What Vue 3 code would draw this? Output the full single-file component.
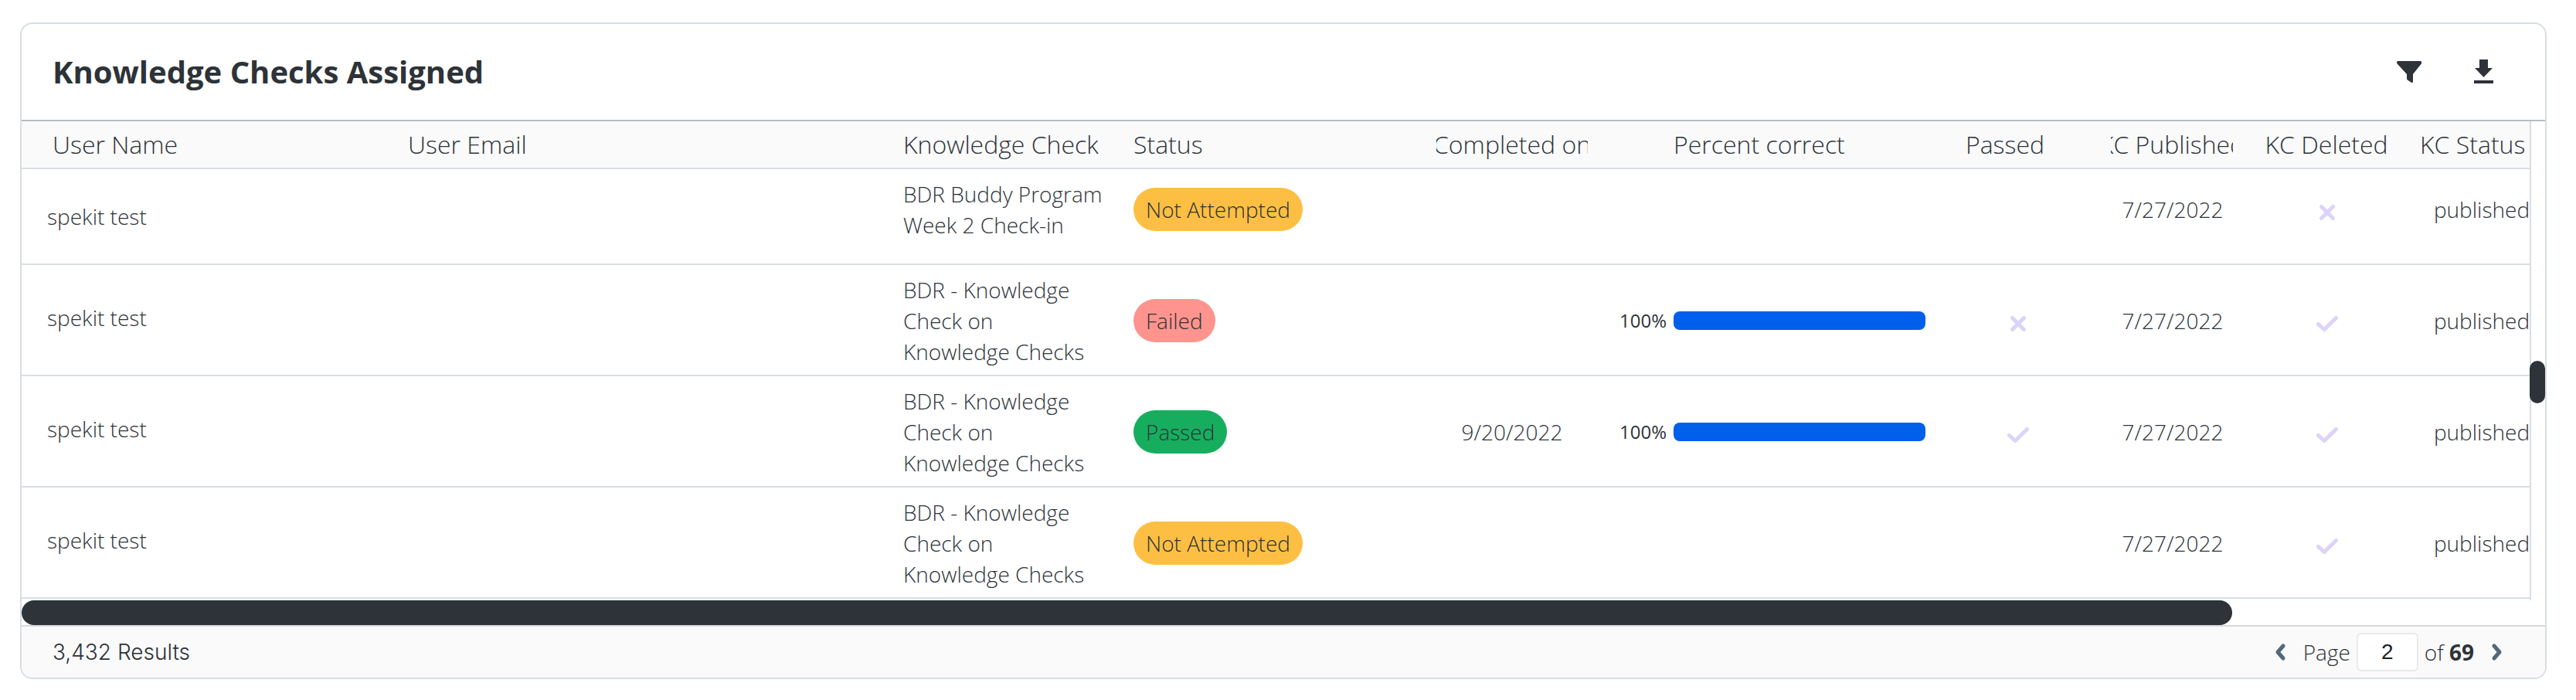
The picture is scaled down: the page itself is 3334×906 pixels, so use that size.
<script setup>
import { ref } from 'vue'

const page = ref('2')

const columns = [
  { key: 'name', label: 'User Name' },
  { key: 'email', label: 'User Email' },
  { key: 'check', label: 'Knowledge Check' },
  { key: 'status', label: 'Status' },
  { key: 'completed', label: 'Completed on' },
  { key: 'percent', label: 'Percent correct' },
  { key: 'passed', label: 'Passed' },
  { key: 'published', label: 'KC Published' },
  { key: 'deleted', label: 'KC Deleted' },
  { key: 'state', label: 'KC Status' },
]

const rows = [
  { id: 1, name: 'spekit test', check: 'BDR Buddy Program Week 2 Check-in', status: 'Not Attempted', tone: 'pending', completed: '', percent: null, passed: null, published: '7/27/2022', deleted: false, state: 'published' },
  { id: 2, name: 'spekit test', check: 'BDR - Knowledge Check on Knowledge Checks', status: 'Failed', tone: 'failed', completed: '', percent: 100, passed: false, published: '7/27/2022', deleted: true, state: 'published' },
  { id: 3, name: 'spekit test', check: 'BDR - Knowledge Check on Knowledge Checks', status: 'Passed', tone: 'passed', completed: '9/20/2022', percent: 100, passed: true, published: '7/27/2022', deleted: true, state: 'published' },
  { id: 4, name: 'spekit test', check: 'BDR - Knowledge Check on Knowledge Checks', status: 'Not Attempted', tone: 'pending', completed: '', percent: null, passed: null, published: '7/27/2022', deleted: true, state: 'published' },
]

const checkPath = 'M2.5 14.5 L10.2 21.5 L25.5 6.5'
const crossPath = 'M6.5 6.5 L21.5 21.5 M21.5 6.5 L6.5 21.5'
</script>

<template>
  <section class="card" aria-labelledby="card-title">
    <header class="card-head">
      <h2 id="card-title">Knowledge Checks Assigned</h2>
      <div class="actions">
        <button type="button" aria-label="Filter">
          <svg width="36" height="32" viewBox="0 0 36 32">
            <path d="M4 2H32C34 2 35 4 33.500 6L23 19V28.500C23 30 21.500 30.500 20.500 29.500L16 26.500Q15 26 15 24.500V19L3 6C1.500 4 2 2 4 2Z" fill="#2d3338" />
          </svg>
        </button>
        <button type="button" aria-label="Download">
          <svg width="36" height="32" viewBox="0 0 36 32">
            <path d="M13 0H24V11H30L18.500 23L7 11H13ZM6 27H31V31H6Z" fill="#2d3338" />
          </svg>
        </button>
      </div>
    </header>

    <div class="body">
      <div class="viewport">
        <table>
          <colgroup>
            <col v-for="c in columns" :key="c.key" :class="'col-' + c.key" />
          </colgroup>
          <thead>
            <tr>
              <th v-for="c in columns" :key="c.key" scope="col" :class="'h-' + c.key">
                <div class="label"><span>{{ c.label }}</span></div>
              </th>
            </tr>
          </thead>
          <tbody>
            <tr v-for="row in rows" :key="row.id">
              <td class="name">{{ row.name }}</td>
              <td></td>
              <td>{{ row.check }}</td>
              <td><span class="pill" :class="row.tone">{{ row.status }}</span></td>
              <td class="center">{{ row.completed }}</td>
              <td>
                <div v-if="row.percent !== null" class="score">
                  <span>{{ row.percent }}%</span>
                  <div class="track"><div class="fill" :style="{ width: row.percent + '%' }"></div></div>
                </div>
              </td>
              <td class="center">
                <svg v-if="row.passed !== null" class="mark" width="28" height="28" viewBox="0 0 28 28" role="img" :aria-label="row.passed ? 'Yes' : 'No'">
                  <path :d="row.passed ? checkPath : crossPath" />
                </svg>
              </td>
              <td class="center">{{ row.published }}</td>
              <td class="center">
                <svg class="mark" width="28" height="28" viewBox="0 0 28 28" role="img" :aria-label="row.deleted ? 'Yes' : 'No'">
                  <path :d="row.deleted ? checkPath : crossPath" />
                </svg>
              </td>
              <td class="center">{{ row.state }}</td>
            </tr>
          </tbody>
        </table>
      </div>
      <div class="v-scroll"><div class="v-thumb"></div></div>
    </div>
    <div class="h-scroll"><div class="h-thumb"></div></div>

    <footer class="card-foot">
      <span class="results">3,432 Results</span>
      <nav class="pager" aria-label="Pagination">
        <button type="button" aria-label="Previous page">
          <svg width="16" height="24" viewBox="0 0 16 24"><path d="M12 4L5 12L12 20" /></svg>
        </button>
        <label for="page-number">Page</label>
        <input id="page-number" v-model="page" type="text" inputmode="numeric" />
        <span class="total">of <b>69</b></span>
        <button type="button" aria-label="Next page">
          <svg width="16" height="24" viewBox="0 0 16 24"><path d="M4 4L11 12L4 20" /></svg>
        </button>
      </nav>
    </footer>
  </section>
</template>

<style>
body {
  background: #fff;
}
</style>

<style scoped>
.card {
  margin: 29px 38px 0 26px;
  border: 2px solid #d8dee2;
  border-radius: 16px;
  overflow: hidden;
  background: #fff;
  color: #2d3338;
  font: 300 28px/40px "Open Sans", "Noto Sans", sans-serif;
}
button {
  display: flex;
  padding: 0;
  border: 0;
  background: none;
  cursor: pointer;
}
.card-head {
  display: flex;
  align-items: center;
  justify-content: space-between;
  height: 124px;
  padding: 0 62px 0 40px;
  border-bottom: 2px solid #b5bcc2;
}
h2 {
  margin: 0;
  font-size: 40px;
  line-height: 56px;
  font-weight: 700;
}
.actions {
  display: flex;
  gap: 60px;
}
.body {
  display: flex;
}
.viewport {
  flex: 1;
  min-width: 0;
  overflow: hidden;
  padding-bottom: 2px;
}
table {
  width: calc(100% + 38px);
  table-layout: fixed;
  border-collapse: separate;
  border-spacing: 0;
}
.col-name { width: 480px; }
.col-check { width: 298px; }
.col-status { width: 391px; }
.col-completed { width: 238px; }
.col-percent { width: 436px; }
.col-passed,
.col-published,
.col-deleted,
.col-state { width: 200px; }
th,
td {
  box-sizing: border-box;
  border-bottom: 2px solid #d8dee2;
  text-align: left;
  font-weight: 300;
}
th {
  height: 62px;
  padding: 0 22px 0 20px;
  background: #fafafa;
  font-size: 32px;
  line-height: 44px;
}
.label {
  display: flex;
  overflow: hidden;
  white-space: nowrap;
}
.h-name { padding-left: 40px; }
.h-completed { padding: 0 21px; }
.h-percent { padding-left: 90px; }
.h-passed { padding-right: 54px; }
.h-completed .label,
.h-passed .label,
.h-published .label,
.h-deleted .label {
  justify-content: center;
}
td {
  height: 144px;
  padding: 12px 20px 10px;
}
tbody tr:first-child td {
  height: 124px;
  padding-bottom: 30px;
}
tbody tr td.name {
  padding: 0 20px 6px 33px;
}
tbody tr:first-child td.name {
  padding-bottom: 0;
}
.center {
  text-align: center;
}
.pill {
  display: inline-block;
  vertical-align: middle;
  padding: 8px 16px;
  border-radius: 28px;
}
.pending { background: #fdbf43; }
.failed { background: #fe948d; }
.passed { background: #16ae5e; }
.score {
  display: flex;
  align-items: center;
  font-size: 24px;
  font-weight: 400;
}
.score span {
  width: 70px;
}
.track {
  flex: 1;
  height: 24px;
}
.fill {
  height: 24px;
  border-radius: 8px;
  background: #0060eb;
}
.mark {
  display: inline-block;
  vertical-align: middle;
  fill: none;
  stroke: #dcd3fa;
  stroke-width: 5px;
  stroke-linecap: round;
  stroke-linejoin: round;
}
.v-scroll {
  display: flex;
  flex-direction: column;
  align-items: center;
  width: 20px;
  box-shadow: inset 2px 0 0 #d8dee2;
}
.v-thumb {
  width: 20px;
  height: 55px;
  margin-top: 310px;
  border-radius: 10px;
  background: #2d3338;
}
.h-scroll {
  height: 32px;
  border-bottom: 2px solid #d5d8da;
}
.h-thumb {
  width: 87.6%;
  height: 32px;
  border-radius: 16px;
  background: #2d3338;
}
.card-foot {
  display: flex;
  align-items: center;
  justify-content: space-between;
  height: 66px;
  padding: 0 54px 0 40px;
  background: #fafafa;
}
.results {
  font-family: Inter, sans-serif;
}
.pager {
  display: flex;
  align-items: center;
}
.pager label {
  margin: 0 8px 0 22px;
}
.pager input {
  box-sizing: border-box;
  width: 80px;
  height: 50px;
  padding: 0;
  border: 2px solid #e8eaeb;
  border-radius: 6px;
  background: #fff;
  color: #1b2126;
  font: 400 28px "Liberation Sans", Arial, sans-serif;
  text-align: center;
}
.total {
  margin: 0 22px 0 8px;
}
.total b {
  font-weight: 700;
}
.pager svg path {
  fill: none;
  stroke: #53687a;
  stroke-width: 5px;
  stroke-linecap: round;
  stroke-linejoin: round;
}
</style>
